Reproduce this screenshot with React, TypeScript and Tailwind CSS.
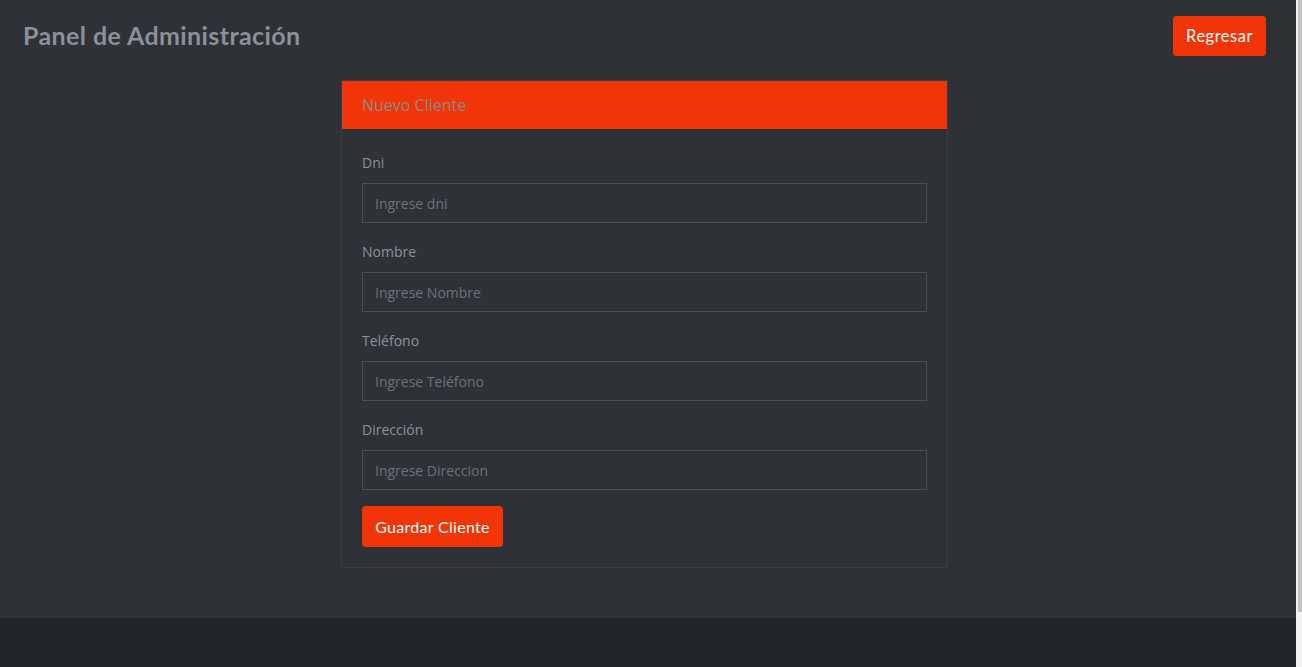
import { useState } from 'react';

const fields = [
  { id: 'dni', label: 'Dni', placeholder: 'Ingrese dni' },
  { id: 'nombre', label: 'Nombre', placeholder: 'Ingrese Nombre' },
  { id: 'telefono', label: 'Teléfono', placeholder: 'Ingrese Teléfono' },
  { id: 'direccion', label: 'Dirección', placeholder: 'Ingrese Direccion' },
];

export default function App() {
  const [form, setForm] = useState<Record<string, string>>({});

  return (
    <div className="flex h-[667px] w-full overflow-hidden bg-[#2e3136]">
      <div className="flex flex-1 flex-col">
        <main className="flex flex-col pb-[50px]">
          {/* Header */}
          <div className="flex h-[80px] items-start justify-between pl-[23px] pr-[30px]">
            <h1 className="mt-[19px] font-['Lato',sans-serif] text-[25px] font-bold leading-[32px] tracking-[0.4px] text-[#8b9099]">
              Panel de Administración
            </h1>
            <button className="mt-[16px] h-[40px] w-[93px] rounded-[4px] bg-[#f23508] font-['Lato',sans-serif] text-[16.5px] tracking-[0.5px] text-white">
              Regresar
            </button>
          </div>

          {/* Card */}
          <div className="ml-[341px] w-[607px] border border-[#393c41] bg-[#2e3136] font-['Open_Sans',sans-serif]">
            <div className="flex h-[48px] items-center bg-[#f23508] px-[20px] text-[16px] text-[#8f8a88]">
              Nuevo Cliente
            </div>
            <div className="flex flex-col px-[20px] pt-[21px] pb-[20px]">
              {fields.map(f => (
                <div key={f.id} className="mb-[16px] flex flex-col">
                  <label htmlFor={f.id} className="mb-[8px] text-[14px] leading-[25px] text-[#8e9298]">
                    {f.label}
                  </label>
                  <input
                    id={f.id}
                    value={form[f.id] || ''}
                    onChange={e => setForm({ ...form, [f.id]: e.target.value })}
                    placeholder={f.placeholder}
                    className="h-[40px] border border-[#4a4d53] bg-[#2e3136] px-[12px] text-[14px] text-[#c9ccd1] outline-none placeholder:text-[#6d7279]"
                  />
                </div>
              ))}
              <div>
                <button className="h-[41px] w-[141px] rounded-[4px] bg-[#f23508] font-['Lato',sans-serif] text-[16px] tracking-[0.3px] text-white">
                  Guardar Cliente
                </button>
              </div>
            </div>
          </div>
        </main>
        <footer className="flex-1 bg-[#212429]" />
      </div>

      {/* Scrollbar */}
      <div className="flex h-full w-[6px] flex-col bg-[#f1f1f1] pl-[2px]">
        <div className="h-[612px] w-full bg-[#c1c1c1]" />
      </div>
    </div>
  );
}
